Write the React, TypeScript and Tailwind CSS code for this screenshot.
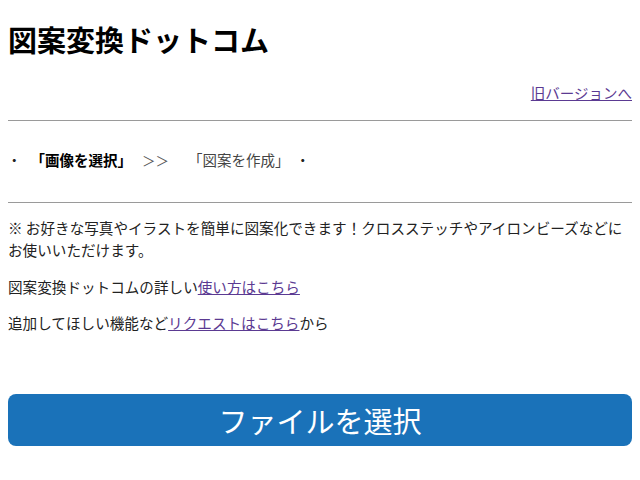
export default function App() {
  const font = { fontFamily: '"Noto Sans CJK JP", "Noto Sans", sans-serif' };
  return (
    <div className="bg-white min-h-[480px] px-2 text-[#222]" style={font}>
      <h1 className="text-[29px] font-bold leading-[36px] pt-[21px] text-black">図案変換ドットコム</h1>

      <div className="flex justify-end mt-[25px] text-[14.5px] leading-[22px]">
        <a href="#" className="underline text-[#5b3a92]">旧バージョンへ</a>
      </div>

      <div className="mt-[16px] border-t border-[#9a9a9a]" />

      <div className="mt-[28px] flex items-center text-[14.5px] leading-[22px]">
        <span className="-ml-[1px]">・</span>
        <span className="ml-[9px] font-bold text-black">「画像を選択」</span>
        <span className="ml-[10px] text-[13.5px] text-[#555]">＞＞</span>
        <span className="ml-[19px] text-[#444]">「図案を作成」</span>
        <span className="ml-[6px]">・</span>
      </div>

      <div className="mt-[31px] border-t border-[#9a9a9a]" />

      <p className="mt-[14px] text-[14.6px] leading-[22px]">
        ※ お好きな写真やイラストを簡単に図案化できます！クロスステッチやアイロンビーズなどにお使いいただけます。
      </p>
      <p className="mt-[15px] text-[14.6px] leading-[22px]">
        図案変換ドットコムの詳しい<a href="#" className="underline text-[#5b3a92]">使い方はこちら</a>
      </p>
      <p className="mt-[14px] text-[14.6px] leading-[22px]">
        追加してほしい機能など<a href="#" className="underline text-[#5b3a92]">リクエストはこちら</a>から
      </p>

      <button className="mt-[60px] w-full h-[52px] rounded-[8px] bg-[#1a72b9] text-white text-[29px] leading-none flex items-center justify-center">
        ファイルを選択
      </button>
    </div>
  );
}
